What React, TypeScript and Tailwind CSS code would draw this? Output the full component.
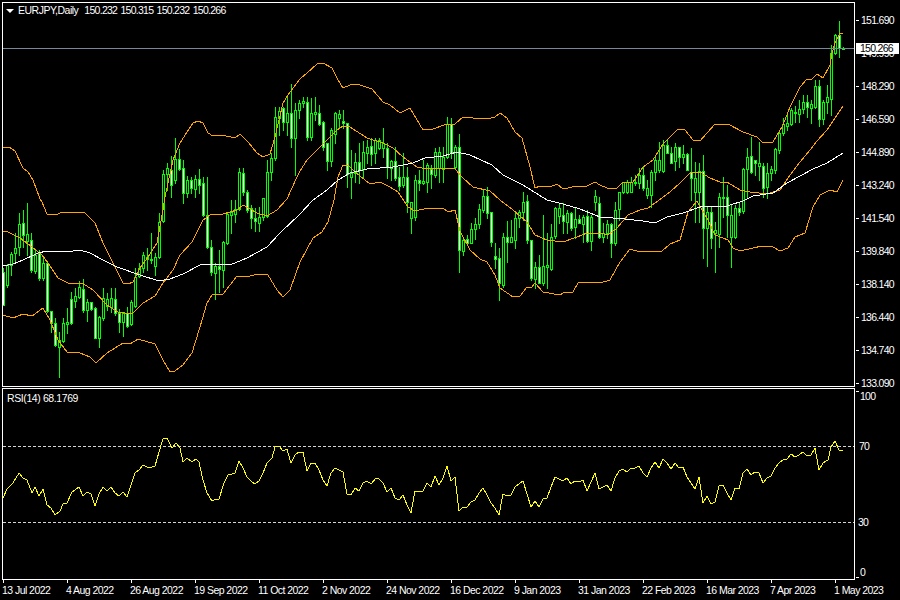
const GREEN = "#00ff00"
const ORANGE = "#ffa500"

// high, body top, body bottom, low, white fill (pixel rows, one bar every 4px from x=3)
const candles: number[][] = [
  [268,272,305,305,1],[264,265,285,287,0],[252,254,265,275,0],[233,248,253,262,0],[213,224,247,255,0],[210,223,235,247,1],[203,234,241,255,0],[233,240,270,272,1],
  [250,255,271,273,0],[250,253,278,280,1],[258,263,278,280,0],[261,263,311,312,1],[311,311,323,332,1],[318,323,345,346,1],[332,340,347,377,0],[318,323,341,342,0],
  [308,322,324,333,0],[292,299,323,324,1],[288,296,301,307,0],[281,287,297,298,0],[279,289,310,312,1],[299,302,310,321,0],[302,302,309,310,1],[307,308,338,338,1],
  [316,317,338,347,0],[288,298,318,320,0],[293,299,306,310,0],[288,298,307,312,0],[288,299,313,315,1],[309,313,322,332,1],[312,313,322,336,0],[307,313,326,327,1],
  [300,302,324,325,0],[268,277,306,307,0],[263,268,276,277,0],[252,255,268,272,0],[248,257,259,270,1],[233,259,260,263,0],[253,257,266,275,0],[213,222,257,258,0],
  [170,174,221,222,0],[163,168,174,190,0],[156,170,185,197,1],[138,159,180,183,0],[149,159,169,170,1],[160,168,193,203,1],[176,180,193,197,0],[177,180,188,193,1],
  [175,179,189,197,0],[169,179,185,193,1],[177,183,215,216,1],[177,215,247,248,1],[240,247,272,275,1],[263,266,273,299,0],[250,266,269,292,1],[241,242,270,287,0],
  [213,214,243,244,0],[200,212,215,233,0],[200,209,214,222,0],[168,172,209,210,0],[168,173,192,195,1],[190,192,210,212,1],[205,208,218,228,1],[208,218,221,231,1],
  [207,217,223,231,0],[198,198,217,220,0],[160,172,216,217,0],[153,158,172,180,0],[107,117,158,160,0],[107,111,118,135,0],[107,108,122,130,1],[95,113,122,135,0],
  [84,113,138,147,1],[103,110,138,175,0],[100,103,110,118,0],[97,101,103,107,0],[97,102,137,140,1],[98,113,137,140,0],[97,112,114,120,0],[105,113,124,125,1],
  [121,122,147,150,1],[143,143,161,170,1],[128,130,161,166,0],[112,113,134,143,0],[110,114,118,127,0],[110,121,123,128,1],[123,123,174,187,1],[150,173,177,198,0],
  [153,162,173,182,0],[143,162,170,183,1],[141,152,169,178,0],[140,147,153,163,0],[138,146,154,165,1],[138,140,153,163,0],[138,140,148,149,0],[128,143,148,157,0],
  [143,148,167,178,1],[160,161,168,180,0],[147,161,178,180,1],[167,177,186,190,1],[153,177,185,187,0],[167,177,202,212,1],[202,202,218,233,0],[175,180,217,220,0],
  [170,180,183,190,1],[160,181,183,184,0],[163,165,182,192,0],[165,169,174,188,1],[148,152,175,177,0],[147,152,168,182,0],[147,157,169,182,0],[117,124,157,158,0],
  [118,124,153,158,1],[145,147,167,168,0],[134,147,250,272,1],[238,240,251,255,0],[235,239,243,245,1],[223,229,243,243,0],[218,224,229,239,0],[204,209,224,228,0],
  [190,196,210,212,0],[187,196,213,218,1],[212,212,242,246,1],[243,256,259,268,1],[248,258,283,300,1],[233,237,285,287,0],[221,237,242,262,1],[220,237,242,242,0],
  [212,218,240,248,0],[210,212,218,227,0],[192,202,212,220,0],[195,201,240,243,1],[240,240,278,280,1],[262,267,279,288,0],[255,267,283,283,1],[215,266,283,285,0],
  [233,265,267,288,0],[224,237,269,270,0],[207,208,236,238,0],[203,208,216,223,0],[203,215,221,233,1],[210,213,222,233,0],[212,213,228,230,1],[207,219,227,238,0],
  [215,219,223,223,1],[215,217,224,242,0],[210,216,241,242,1],[215,217,241,250,0],[190,196,202,210,0],[197,203,237,238,1],[223,233,237,242,0],[220,224,233,238,0],
  [223,224,243,257,1],[202,210,243,245,0],[192,192,209,220,0],[182,182,192,193,0],[180,182,192,193,0],[177,182,192,192,0],[175,182,183,185,0],[168,175,183,188,0],
  [167,175,188,190,1],[180,188,195,198,0],[170,172,195,207,0],[157,160,172,180,0],[142,160,170,172,0],[140,145,171,172,0],[140,145,153,153,1],[147,153,163,163,1],
  [143,147,161,170,0],[147,147,157,167,1],[145,154,157,163,0],[153,154,170,170,1],[148,172,178,200,1],[162,178,192,222,0],[163,171,192,222,0],[155,171,228,258,1],
  [207,212,228,266,0],[207,212,238,248,1],[222,230,233,272,0],[193,197,234,247,0],[177,197,198,217,0],[185,197,215,237,1],[205,215,237,267,0],[205,208,237,238,0],
  [203,208,212,215,1],[168,169,211,213,0],[148,157,169,197,0],[137,156,172,173,1],[160,160,163,175,1],[142,163,166,180,0],[163,166,188,197,1],[163,173,187,198,0],
  [166,169,173,180,0],[148,149,170,173,0],[132,133,150,153,0],[118,124,133,135,0],[115,123,126,130,0],[108,110,124,125,0],[106,112,113,122,0],[100,109,114,122,0],
  [95,102,109,113,0],[95,102,107,117,1],[100,104,108,123,0],[80,86,107,108,0],[80,86,119,126,1],[100,102,119,124,0],[85,97,102,113,0],[45,53,99,115,0],
  [34,35,53,54,0],[21,35,48,57,1],[47,48,49,49,0],
]

const upper = "3,147 9,147 15,151 23,168 28,172 33,180 40,199 42,202 47,214 55,215 63,212 85,213 95,223 103,243 113,263 123,283 128,284 133,282 140,268 148,257 157,243 163,210 165,197 173,160 180,143 187,132 193,123 198,121 203,123 208,133 213,136 222,135 235,138 240,134 248,142 257,153 263,157 270,154 275,137 283,103 288,95 300,79 307,73 317,64 323,63 332,68 338,80 343,88 350,85 357,84 372,89 383,102 390,105 400,113 410,108 423,130 433,129 447,124 455,124 463,117 473,118 487,119 495,117 500,113 507,118 515,132 522,138 530,167 535,188 540,186 550,187 557,184 563,189 577,186 587,186 595,182 600,185 607,188 617,188 622,183 633,182 643,167 653,160 663,144 672,135 678,129 685,130 693,140 700,141 707,133 715,124 728,124 743,132 757,137 763,143 773,142 783,125 790,107 800,87 807,79 812,79 817,74 823,78 830,65 832,53 835,43 840,33 843,33"
const middle = "3,231 8,232 20,238 32,247 42,255 48,263 58,278 68,283 82,283 93,290 107,305 118,312 132,314 143,303 155,296 163,283 173,270 180,255 192,242 203,220 210,215 223,214 237,210 243,205 257,213 267,216 277,210 287,199 297,177 300,171 307,160 317,150 327,140 337,130 343,126 350,127 367,138 383,143 393,148 403,157 417,167 427,169 440,168 455,169 463,178 473,187 490,191 500,200 513,210 527,222 535,235 547,240 563,242 577,237 587,233 600,233 608,235 617,228 628,215 640,210 648,208 662,198 670,192 680,183 690,173 700,172 710,178 720,182 727,182 740,190 750,192 767,194 780,190 790,175 800,162 810,150 817,141 827,130 837,115 843,106"
const lower = "3,315 13,318 23,314 32,316 43,308 50,320 58,340 67,352 80,353 90,357 96,363 107,353 115,348 123,343 130,344 138,339 155,344 163,360 170,372 175,371 183,365 192,353 200,327 207,303 212,295 223,294 237,276 250,276 258,274 268,275 277,290 283,297 290,290 300,262 313,238 322,232 328,222 334,200 338,177 343,165 348,165 355,172 370,184 380,182 390,187 398,192 408,207 415,211 428,208 443,208 448,212 455,210 460,231 470,250 480,259 487,262 495,275 500,288 513,297 520,296 527,287 532,287 535,283 543,292 560,295 563,293 573,292 578,283 590,282 600,283 610,280 620,262 630,249 640,252 662,251 670,244 680,240 688,212 697,201 702,210 707,218 715,235 728,240 733,248 740,251 762,246 773,247 780,251 788,248 795,237 805,233 813,207 820,195 830,190 837,192 843,180"
const ma = "3,266 13,264 23,260 38,253 47,251 53,251 67,252 80,250 90,253 103,260 117,267 140,275 159,281 170,279 183,274 202,264 217,264 230,265 247,258 267,247 280,233 300,214 313,200 327,190 338,180 350,173 367,169 393,167 413,163 425,158 443,156 457,152 470,155 492,165 503,175 523,185 547,200 563,204 580,209 600,217 625,219 643,221 655,223 667,217 683,213 700,207 727,206 743,201 753,196 773,193 787,183 813,169 827,163 843,153"

const rsi = "3,498 7,489 13,483 19,473 23,478 27,480 32,493 35,487 39,496 43,489 47,505 51,508 55,515 60,511 63,504 67,503 72,492 79,487 83,496 87,492 91,494 95,506 99,494 103,487 107,491 111,487 115,493 119,496 123,492 127,497 131,485 135,473 139,470 143,465 147,467 152,467 155,466 159,452 163,439 167,438 172,448 176,443 180,448 183,462 187,458 192,462 196,459 199,462 203,480 207,493 212,501 216,499 219,499 224,483 228,475 232,474 235,473 239,461 243,468 247,477 252,482 255,484 259,481 263,473 267,463 272,458 275,447 279,446 283,451 287,449 291,463 295,455 299,452 303,452 307,471 311,463 315,463 319,470 323,480 327,486 331,473 335,468 339,470 343,472 347,494 351,495 355,488 359,491 363,483 367,481 371,484 376,478 379,479 383,483 387,492 391,488 395,498 399,500 403,495 407,505 411,513 415,491 423,491 427,483 431,487 435,476 439,485 443,478 447,466 451,481 455,477 459,511 463,507 467,507 471,502 475,500 479,493 483,488 487,495 491,503 495,508 499,515 503,494 507,496 511,495 515,487 519,484 523,481 527,494 531,507 535,501 539,507 543,499 547,498 551,487 555,477 559,479 563,481 567,478 571,484 575,481 579,482 583,480 587,491 591,482 595,473 599,489 603,487 607,485 611,491 615,478 619,471 623,469 627,472 631,468 635,468 639,466 643,473 647,477 651,468 655,462 659,468 663,459 667,463 671,469 675,463 679,468 683,467 687,477 691,483 695,489 699,477 703,503 707,496 711,504 715,502 719,486 723,485 727,493 731,500 735,488 739,489 743,473 747,469 751,475 755,472 759,473 763,483 767,478 771,476 775,468 779,463 783,460 787,459 791,454 795,457 799,455 803,452 807,456 811,455 815,448 819,470 823,463 828,460 831,447 835,441 839,450 843,450"

const prices = ["151.690", "149.990", "148.290", "146.590", "144.890", "143.240", "141.540", "139.840", "138.140", "136.440", "134.740", "133.090"]
const dates = ["13 Jul 2022", "4 Aug 2022", "26 Aug 2022", "19 Sep 2022", "11 Oct 2022", "2 Nov 2022", "24 Nov 2022", "16 Dec 2022", "9 Jan 2023", "31 Jan 2023", "22 Feb 2023", "16 Mar 2023", "7 Apr 2023", "1 May 2023"]

function Candle({ c, i }: { c: number[]; i: number }) {
  const x = 3 + i * 4
  const [high, top, bottom, low, filled] = c
  return (
    <g>
      <rect x={x} y={high} width={1} height={low - high + 1} fill={GREEN} />
      <rect x={x - 1} y={top} width={3} height={bottom - top + 1} fill={GREEN} />
      {bottom - top > 1 && <rect x={x} y={top + 1} width={1} height={bottom - top - 1} fill={filled ? "#ffffff" : "#000000"} />}
    </g>
  )
}

function Line({ points, color }: { points: string; color: string }) {
  return <polyline points={points} fill="none" stroke={color} strokeWidth={1} shapeRendering="crispEdges" />
}

export default function App() {
  return (
    <div className="w-[900px] h-[600px] overflow-hidden bg-black pl-[2px] pt-[2px] text-[10.5px] tracking-[-0.72px] text-white font-['Liberation_Sans',sans-serif]">
      <div className="flex h-[385px]">
        <div className="relative w-[853px] shrink-0 border border-white">
          <svg width={851} height={383} viewBox="3 3 851 383" className="block" shapeRendering="crispEdges">
            {candles.map((c, i) => (
              <Candle key={i} c={c} i={i} />
            ))}
            <Line points={upper} color={ORANGE} />
            <Line points={middle} color={ORANGE} />
            <Line points={lower} color={ORANGE} />
            <Line points={ma} color="#ffffff" />
            <rect x={3} y={48} width={851} height={1} fill="#778899" />
          </svg>
          <div className="absolute left-[3px] top-0 flex h-[15px] items-center whitespace-nowrap">
            <svg width={8} height={4} viewBox="0 0 8 4" className="mr-[4px]">
              <polygon points="0,0 8,0 4,4" fill="#ffffff" />
            </svg>
            <span className="tracking-[-0.5px]">EURJPY,Daily</span>
            <span className="ml-[6px] [word-spacing:1px]">150.232 150.315 150.232 150.266</span>
          </div>
        </div>
        <div className="relative flex-1 pt-[2px]">
          {prices.map((p) => (
            <div key={p} className="flex h-[33px] shrink-0 items-center">
              <span className="ml-px h-px w-[3px] bg-white" />
              <span className="ml-[2px]">{p}</span>
            </div>
          ))}
          <div className="absolute left-px top-[41px] flex h-[11px] w-[43px] items-center bg-white pl-[4px] text-black">150.266</div>
        </div>
      </div>

      <div className="mt-px flex h-[192px]">
        <div className="relative w-[853px] shrink-0 border border-white">
          <svg width={851} height={190} viewBox="3 389 851 190" className="block" shapeRendering="crispEdges">
            <line x1={3} y1={446.5} x2={854} y2={446.5} stroke="#d4d4d4" strokeDasharray="3 2" />
            <line x1={3} y1={522.5} x2={854} y2={522.5} stroke="#d4d4d4" strokeDasharray="3 2" />
            <Line points={rsi} color="#ffff00" />
          </svg>
          <div className="absolute left-[4px] top-[2px] whitespace-nowrap tracking-[-0.4px]">RSI(14) 68.1769</div>
        </div>
        <div className="flex-1 pl-px">
          <div className="mt-[2px] flex h-[12px] items-start">
            <span className="mt-px h-px w-[3px] bg-white" />
            <span className="ml-px leading-[12px]">100</span>
          </div>
          <div className="mt-[38px] h-[12px] pl-[3px] leading-[12px]">70</div>
          <div className="mt-[64px] h-[12px] pl-[2px] leading-[12px]">30</div>
          <div className="mt-[38px] flex h-[12px] items-start">
            <span className="mt-[11px] h-px w-[3px] bg-white" />
            <span className="ml-px leading-[12px]">0</span>
          </div>
        </div>
      </div>

      <div className="flex">
        {dates.map((d) => (
          <div key={d} className="w-[64px] shrink-0">
            <span className="ml-px block h-[3px] w-px bg-white" />
            <div className="whitespace-nowrap leading-[14px] tracking-[-0.55px]">{d}</div>
          </div>
        ))}
      </div>
    </div>
  )
}
